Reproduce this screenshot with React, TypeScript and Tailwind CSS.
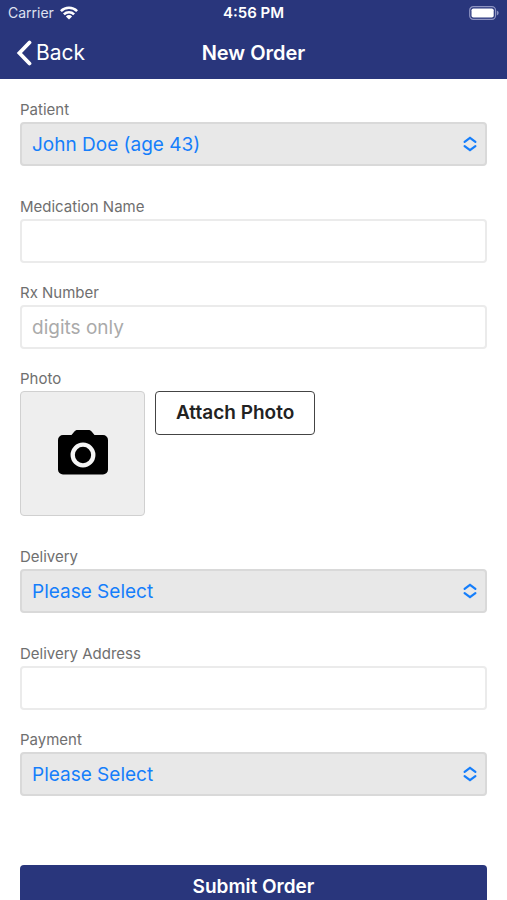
import { useState } from "react";

const WifiIcon = () => (
  <svg viewBox="0 0 18 14" className="h-3.5 w-[18px] text-white" aria-hidden="true">
    <g fill="none" stroke="currentColor" strokeWidth="2.6">
      <path d="M0.9 5.1a11.6 11.6 0 0 1 16.2 0" />
      <path d="M3.9 8.4a7.3 7.3 0 0 1 10.2 0" />
    </g>
    <path d="M9 13.6 5.9 10.4a4.4 4.4 0 0 1 6.2 0Z" fill="currentColor" />
  </svg>
);

const BatteryIcon = () => (
  <svg viewBox="0 0 30 14" className="h-3.5 w-[30px]" aria-hidden="true">
    <rect x="0.7" y="0.7" width="25.8" height="12.6" rx="3.6" fill="none" stroke="#8e94c2" strokeWidth="1.2" />
    <rect x="2.5" y="2.5" width="22.2" height="9" rx="1.8" fill="#fff" />
    <path d="M27.8 4.6c1.1.4 1.8 1.3 1.8 2.4s-.7 2-1.8 2.4Z" fill="#8e94c2" />
  </svg>
);

const BackIcon = () => (
  <svg viewBox="0 0 16 26" className="h-[26px] w-4" fill="none" stroke="currentColor" aria-hidden="true">
    <path d="M13.5 2.5 3.4 13l10.1 10.5" strokeWidth="3.8" strokeLinecap="round" strokeLinejoin="miter" />
  </svg>
);

const CameraIcon = () => (
  <svg viewBox="0 0 50 48" className="h-12 w-[50px]" aria-hidden="true">
    <path
      d="M5 5h8.500l2.700-3.300C17.100.6 18.200 0 19.500 0h11c1.300 0 2.400.6 3.300 1.700L36.500 5H45a5 5 0 0 1 5 5v29.500a5 5 0 0 1-5 5H5a5 5 0 0 1-5-5V10a5 5 0 0 1 5-5Z"
      fill="#000"
    />
    <circle cx="25" cy="25" r="10.300" fill="none" stroke="#f4f4f4" strokeWidth="4.300" />
  </svg>
);

const SelectArrows = () => (
  <svg
    viewBox="0 0 14 16"
    className="pointer-events-none absolute top-3.5 right-2.5 h-4 w-3.5"
    fill="none"
    stroke="#157efb"
    strokeWidth="2.200"
    strokeLinecap="round"
    aria-hidden="true"
  >
    <path d="M1.600 5.800 7 1.800l5.400 4M1.600 10.200l5.400 4 5.400-4" />
  </svg>
);

type FieldProps = {
  id: string;
  label: string;
};

const labelClass = "block text-[15px] leading-6 text-[#6f6f6f]";

const TextField = ({ id, label, placeholder }: FieldProps & { placeholder?: string }) => {
  const [value, setValue] = useState("");

  return (
    <div className="mb-[18px]">
      <label htmlFor={id} className={labelClass}>
        {label}
      </label>
      <input
        id={id}
        type="text"
        value={value}
        placeholder={placeholder}
        onChange={(e) => setValue(e.target.value)}
        className="block h-11 w-full rounded border-2 border-[#ebebeb] bg-white px-2.5 text-[19px] text-[#222] placeholder:text-[#aaa]"
      />
    </div>
  );
};

const SelectField = ({ id, label, options }: FieldProps & { options: string[] }) => (
  <div className="mb-[29px]">
    <label htmlFor={id} className={labelClass}>
      {label}
    </label>
    <div className="relative">
      <select
        id={id}
        className="block h-11 w-full appearance-none rounded border-2 border-[#d9d9d9] bg-[#e8e8e8] px-2.5 pt-0.5 text-[19px] text-[#157efb]"
      >
        {options.map((option) => (
          <option key={option}>{option}</option>
        ))}
      </select>
      <SelectArrows />
    </div>
  </div>
);

export default function App() {
  return (
    <div className="flex h-screen flex-col bg-white font-['Inter','Liberation_Sans',sans-serif]">
      <header className="shrink-0 bg-[#29367c] text-white">
        <div className="grid h-[26px] grid-cols-3 items-center px-2">
          <div className="flex items-center gap-1.5 text-sm text-[#dfe1f0]">
            <span>Carrier</span>
            <WifiIcon />
          </div>
          <span className="text-center text-[15px] font-semibold">4:56 PM</span>
          <div className="flex justify-end">
            <BatteryIcon />
          </div>
        </div>
        <div className="grid h-[53px] grid-cols-3 items-center px-4">
          <button type="button" className="flex items-center gap-1 text-[21px]">
            <BackIcon />
            Back
          </button>
          <h1 className="text-center text-[20px] font-semibold whitespace-nowrap">New Order</h1>
        </div>
      </header>

      <main className="min-h-0 flex-1 overflow-y-auto px-5 pt-[19px] [scrollbar-width:none]">
        <form onSubmit={(e) => e.preventDefault()}>
          <SelectField id="patient" label="Patient" options={["John Doe (age 43)"]} />
          <TextField id="medication" label="Medication Name" />
          <TextField id="rx" label="Rx Number" placeholder="digits only" />

          <div className="mb-[29px]">
            <div className={labelClass}>Photo</div>
            <div className="flex items-start gap-2.5">
              <div className="flex size-[125px] items-center justify-center rounded border border-[#d0d0d0] bg-[#eee]">
                <CameraIcon />
              </div>
              <button
                type="button"
                className="h-11 rounded border border-[#444] bg-white px-5 text-[19px] font-semibold text-[#222]"
              >
                Attach Photo
              </button>
            </div>
          </div>

          <SelectField id="delivery" label="Delivery" options={["Please Select", "Pickup", "Home Delivery"]} />
          <TextField id="address" label="Delivery Address" />
          <SelectField id="payment" label="Payment" options={["Please Select", "Cash", "Credit Card"]} />

          <button
            type="submit"
            className="mt-10 mb-5 h-11 w-full rounded bg-[#29367c] text-[19px] font-semibold text-white"
          >
            Submit Order
          </button>
        </form>
      </main>
    </div>
  );
}
